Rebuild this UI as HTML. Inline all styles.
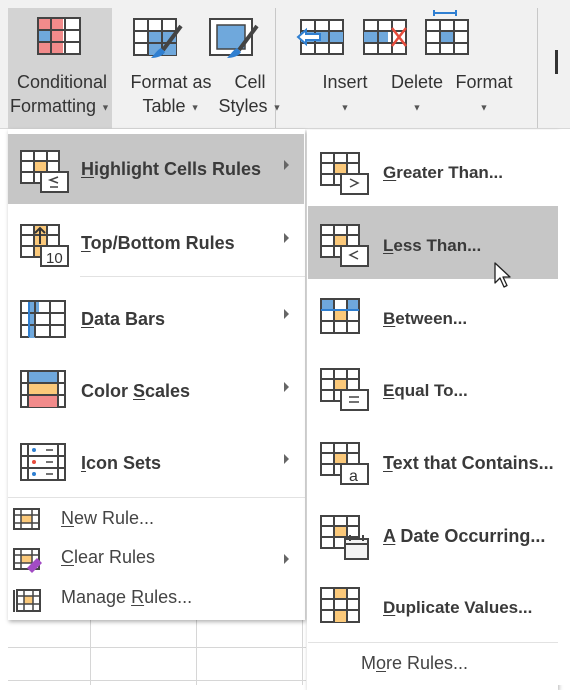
<!DOCTYPE html>
<html><head><meta charset="utf-8">
<style>
*{margin:0;padding:0;box-sizing:border-box}
body{width:570px;height:685px;overflow:hidden;background:#fff;font-family:"Liberation Sans",sans-serif;position:relative;color:#333}
.abs{position:absolute}
.rib{left:0;top:0;width:570px;height:129px;background:#f1f1f1;border-bottom:1px solid #d8d8d8}
.rl{position:absolute;font-size:18px;color:#333;text-align:center;line-height:24px;white-space:nowrap}
.car{font-size:9px;color:#555;vertical-align:middle}
.menu{background:#fff;box-shadow:1px 2px 4px rgba(0,0,0,.3)}
.it{position:absolute;font-size:17px;font-weight:bold;color:#3a3a3a;white-space:nowrap}
.l{font-size:18px}
.sm{position:absolute;font-size:18px;color:#444;white-space:nowrap}
.arr{position:absolute;width:0;height:0;border-left:5px solid #666;border-top:5px solid transparent;border-bottom:5px solid transparent}
u{text-decoration:underline;text-underline-offset:2px}
svg{position:absolute}
</style></head><body>
<div class="abs rib"></div>
<div class="abs" style="left:8px;top:8px;width:104px;height:121px;background:#d3d3d3"></div>
<div class="abs" style="left:275px;top:8px;width:1px;height:120px;background:#c8c8c8"></div>
<div class="abs" style="left:537px;top:8px;width:1px;height:120px;background:#c8c8c8"></div>
<div class="abs" style="left:555px;top:50px;width:3px;height:24px;background:#333"></div>

<svg style="left:37px;top:16px" width="44" height="40" viewBox="0 0 44 38">
<rect x="1" y="1" width="42" height="36" fill="#fff" stroke="#444" stroke-width="2"/>
<rect x="2" y="2" width="24" height="10" fill="#f28b8b"/><rect x="2" y="25" width="24" height="11" fill="#f28b8b"/><rect x="14" y="12" width="12" height="13" fill="#f28b8b"/><rect x="2" y="13" width="12" height="12" fill="#6fa8dc"/>
<path d="M14 1v36M28 1v36M1 13h42M1 25h42" stroke="#444" stroke-width="2" fill="none"/></svg>
<svg style="left:133px;top:18px" width="50" height="44" viewBox="0 0 50 44">
<rect x="1" y="1" width="42" height="36" fill="#fff" stroke="#444" stroke-width="2"/><rect x="15" y="13" width="28" height="24" fill="#6fa8dc"/>
<path d="M15 1v36M29 1v36M1 13h42M1 25h42" stroke="#444" stroke-width="2" fill="none"/>
<path d="M48 8L30 32" stroke="#444" stroke-width="4"/><path d="M28 30c-4 2-6 6-10 10 6 0 12-2 14-6z" fill="#2f7fd1"/></svg>
<svg style="left:209px;top:18px" width="50" height="44" viewBox="0 0 50 44">
<rect x="1" y="1" width="42" height="36" fill="#fff" stroke="#444" stroke-width="2"/><rect x="8" y="7" width="28" height="24" fill="#6fa8dc" stroke="#444" stroke-width="1.5"/>
<path d="M48 8L30 32" stroke="#444" stroke-width="4"/><path d="M28 30c-4 2-6 6-10 10 6 0 12-2 14-6z" fill="#2f7fd1"/></svg>
<svg style="left:296px;top:18px" width="50" height="38" viewBox="0 0 50 38">
<rect x="5" y="2" width="42" height="34" fill="#fff" stroke="#444" stroke-width="2"/><rect x="5" y="13" width="42" height="12" fill="#6fa8dc"/>
<path d="M19 2v34M33 2v34M5 13h42M5 25h42" stroke="#444" stroke-width="2" fill="none"/>
<path d="M2 19l8-7v4h14v6h-14v4z" fill="#fff" stroke="#2f7fd1" stroke-width="2"/></svg>
<svg style="left:362px;top:18px" width="48" height="38" viewBox="0 0 48 38">
<rect x="2" y="2" width="42" height="34" fill="#fff" stroke="#444" stroke-width="2"/><rect x="2" y="13" width="24" height="12" fill="#6fa8dc"/>
<path d="M16 2v34M30 2v34M2 13h42M2 25h42" stroke="#444" stroke-width="2" fill="none"/>
<path d="M30 10l14 18M44 10l-14 18" stroke="#e74c3c" stroke-width="2.5"/></svg>
<svg style="left:424px;top:10px" width="48" height="46" viewBox="0 0 48 46">
<path d="M10 3h22M10 0v6M32 0v6" stroke="#2f7fd1" stroke-width="2"/>
<rect x="2" y="10" width="42" height="34" fill="#fff" stroke="#444" stroke-width="2"/><rect x="16" y="21" width="14" height="12" fill="#6fa8dc"/>
<path d="M16 10v34M30 10v34M2 21h42M2 33h42" stroke="#444" stroke-width="2" fill="none"/></svg>

<div class="rl" style="left:8px;top:70px;width:108px">Conditional</div>
<div class="rl" style="left:2px;top:94px;width:116px">Formatting <span class="car">▼</span></div>
<div class="rl" style="left:116px;top:70px;width:110px">Format as</div>
<div class="rl" style="left:116px;top:94px;width:110px">Table <span class="car">▼</span></div>
<div class="rl" style="left:210px;top:70px;width:80px">Cell</div>
<div class="rl" style="left:208px;top:94px;width:84px">Styles <span class="car">▼</span></div>
<div class="rl" style="left:300px;top:70px;width:90px">Insert</div>
<div class="rl" style="left:300px;top:94px;width:90px"><span class="car">▼</span></div>
<div class="rl" style="left:382px;top:70px;width:70px">Delete</div>
<div class="rl" style="left:382px;top:94px;width:70px"><span class="car">▼</span></div>
<div class="rl" style="left:446px;top:70px;width:76px">Format</div>
<div class="rl" style="left:446px;top:94px;width:76px"><span class="car">▼</span></div>

<div class="abs" style="left:8px;top:647px;width:298px;height:1px;background:#d6d6d6"></div>
<div class="abs" style="left:8px;top:680px;width:298px;height:1px;background:#d6d6d6"></div>
<div class="abs" style="left:90px;top:620px;width:1px;height:65px;background:#d6d6d6"></div>
<div class="abs" style="left:196px;top:620px;width:1px;height:65px;background:#d6d6d6"></div>
<div class="abs" style="left:302px;top:620px;width:1px;height:65px;background:#d6d6d6"></div>

<div class="abs menu" style="left:8px;top:129px;width:297px;height:491px"></div>
<div class="abs" style="left:8px;top:134px;width:296px;height:70px;background:#c6c6c6"></div>
<div class="abs" style="left:80px;top:276px;width:225px;height:1px;background:#e2e2e2"></div>
<div class="abs" style="left:8px;top:497px;width:297px;height:1px;background:#e2e2e2"></div>

<svg style="left:20px;top:150px" width="50" height="44" viewBox="0 0 50 44">
<rect x="1" y="1" width="38" height="32" fill="#fff" stroke="#444" stroke-width="2"/><rect x="14" y="11" width="13" height="11" fill="#fbc97a"/>
<path d="M14 1v32M27 1v32M1 11h38M1 22h38" stroke="#444" stroke-width="2" fill="none"/>
<rect x="21" y="22" width="27" height="20" fill="#fff" stroke="#444" stroke-width="2"/><path d="M38 27l-8 3 8 3M30 37h8" stroke="#444" stroke-width="1.5" fill="none"/></svg>
<svg style="left:20px;top:224px" width="50" height="44" viewBox="0 0 50 44">
<rect x="1" y="1" width="38" height="32" fill="#fff" stroke="#444" stroke-width="2"/><rect x="14" y="2" width="13" height="30" fill="#fbc97a"/>
<path d="M14 1v32M27 1v32M1 11h38M1 22h38" stroke="#444" stroke-width="2" fill="none"/>
<path d="M20 20V4M15 9l5-5 5 5" stroke="#333" stroke-width="2" fill="none"/>
<rect x="21" y="22" width="27" height="20" fill="#fff" stroke="#444" stroke-width="2"/><text x="26" y="39" font-size="15" font-family="Liberation Sans" fill="#333">10</text></svg>
<svg style="left:20px;top:300px" width="48" height="40" viewBox="0 0 48 40">
<rect x="1" y="1" width="44" height="36" fill="#fff" stroke="#444" stroke-width="2"/><rect x="9" y="2" width="10" height="12" fill="#6fa8dc"/><rect x="9" y="14" width="6" height="24" fill="#6fa8dc"/>
<path d="M15 1v36M30 1v36M1 13h44M1 25h44" stroke="#444" stroke-width="2" fill="none"/><path d="M9 2v35" stroke="#2f7fd1" stroke-width="2"/></svg>
<svg style="left:20px;top:370px" width="48" height="40" viewBox="0 0 48 40">
<rect x="1" y="1" width="44" height="36" fill="#fff" stroke="#444" stroke-width="2"/><rect x="8" y="2" width="30" height="11" fill="#6fa8dc"/><rect x="8" y="13" width="30" height="12" fill="#fbc97a"/><rect x="8" y="25" width="30" height="12" fill="#f28b8b"/>
<path d="M8 1v36M38 1v36M1 13h44M1 25h44" stroke="#444" stroke-width="2" fill="none"/></svg>
<svg style="left:20px;top:443px" width="48" height="40" viewBox="0 0 48 40">
<rect x="1" y="1" width="44" height="36" fill="#fff" stroke="#444" stroke-width="2"/>
<path d="M8 1v36M38 1v36M1 13h44M1 25h44" stroke="#444" stroke-width="2" fill="none"/>
<circle cx="14" cy="7" r="2" fill="#2f7fd1"/><circle cx="14" cy="19" r="2" fill="#e74c3c"/><circle cx="14" cy="31" r="2" fill="#2f7fd1"/>
<path d="M26 7h7M26 19h7M26 31h7" stroke="#444" stroke-width="1.5"/></svg>

<div class="it l" style="left:81px;top:159px"><u>H</u>ighlight Cells Rules</div>
<div class="it l" style="left:81px;top:233px"><u>T</u>op/Bottom Rules</div>
<div class="it l" style="left:81px;top:309px"><u>D</u>ata Bars</div>
<div class="it l" style="left:81px;top:381px">Color <u>S</u>cales</div>
<div class="it l" style="left:81px;top:453px"><u>I</u>con Sets</div>
<div class="arr" style="left:284px;top:160px"></div>
<div class="arr" style="left:284px;top:233px"></div>
<div class="arr" style="left:284px;top:309px"></div>
<div class="arr" style="left:284px;top:382px"></div>
<div class="arr" style="left:284px;top:454px"></div>
<div class="arr" style="left:284px;top:554px"></div>

<svg style="left:13px;top:508px" width="28" height="24" viewBox="0 0 28 24">
<rect x="1" y="1" width="25" height="20" fill="#fff" stroke="#444" stroke-width="2"/><rect x="8" y="7" width="11" height="8" fill="#fbc97a"/><path d="M8 1v20M19 1v20M1 7h25M1 15h25" stroke="#444" stroke-width="1.5" fill="none"/></svg>
<svg style="left:13px;top:548px" width="30" height="26" viewBox="0 0 30 26">
<rect x="1" y="1" width="25" height="20" fill="#fff" stroke="#444" stroke-width="2"/><rect x="8" y="7" width="11" height="8" fill="#fbc97a"/><path d="M8 1v20M19 1v20M1 7h25M1 15h25" stroke="#444" stroke-width="1.5" fill="none"/>
<path d="M14 20l10-10 5 5-10 10z" fill="#a24bc4"/></svg>
<svg style="left:13px;top:587px" width="28" height="26" viewBox="0 0 28 26">
<path d="M1 25V3" stroke="#444" stroke-width="2"/><rect x="4" y="3" width="23" height="21" fill="#fff" stroke="#444" stroke-width="2"/><rect x="11" y="9" width="9" height="8" fill="#fbc97a"/><path d="M11 3v21M20 3v21M4 9h23M4 17h23" stroke="#444" stroke-width="1.5" fill="none"/></svg>
<div class="sm" style="left:61px;top:508px"><u>N</u>ew Rule...</div>
<div class="sm" style="left:61px;top:547px"><u>C</u>lear Rules</div>
<div class="sm" style="left:61px;top:587px">Manage <u>R</u>ules...</div>

<div class="abs menu" style="left:307px;top:130px;width:251px;height:560px;overflow:hidden"></div>
<div class="abs" style="left:308px;top:206px;width:250px;height:73px;background:#c6c6c6"></div>
<div class="abs" style="left:308px;top:642px;width:250px;height:1px;background:#e2e2e2"></div>

<svg style="left:320px;top:152px" width="50" height="44" viewBox="0 0 50 44">
<rect x="1" y="1" width="38" height="32" fill="#fff" stroke="#444" stroke-width="2"/><rect x="14" y="11" width="13" height="11" fill="#fbc97a"/><path d="M14 1v32M27 1v32M1 11h38M1 22h38" stroke="#444" stroke-width="2" fill="none"/>
<rect x="21" y="22" width="27" height="20" fill="#fff" stroke="#444" stroke-width="2"/><path d="M30 27l8 4-8 4" stroke="#444" stroke-width="1.5" fill="none"/></svg>
<svg style="left:320px;top:224px" width="50" height="44" viewBox="0 0 50 44">
<rect x="1" y="1" width="38" height="32" fill="#fff" stroke="#444" stroke-width="2"/><rect x="14" y="11" width="13" height="11" fill="#fbc97a"/><path d="M14 1v32M27 1v32M1 11h38M1 22h38" stroke="#444" stroke-width="2" fill="none"/>
<rect x="21" y="22" width="27" height="20" fill="#fff" stroke="#444" stroke-width="2"/><path d="M38 27l-8 4 8 4" stroke="#444" stroke-width="1.5" fill="none"/></svg>
<svg style="left:320px;top:298px" width="42" height="38" viewBox="0 0 42 38">
<rect x="1" y="1" width="38" height="34" fill="#fff" stroke="#444" stroke-width="2"/><rect x="2" y="2" width="12" height="10" fill="#6fa8dc"/><rect x="27" y="2" width="11" height="10" fill="#6fa8dc"/><rect x="14" y="12" width="13" height="11" fill="#fbc97a"/>
<path d="M14 1v34M27 1v34M1 12h38M1 23h38" stroke="#444" stroke-width="2" fill="none"/><path d="M1 12h38" stroke="#2f7fd1" stroke-width="2"/></svg>
<svg style="left:320px;top:368px" width="50" height="44" viewBox="0 0 50 44">
<rect x="1" y="1" width="38" height="32" fill="#fff" stroke="#444" stroke-width="2"/><rect x="14" y="11" width="13" height="11" fill="#fbc97a"/><path d="M14 1v32M27 1v32M1 11h38M1 22h38" stroke="#444" stroke-width="2" fill="none"/>
<rect x="21" y="22" width="27" height="20" fill="#fff" stroke="#444" stroke-width="2"/><path d="M29 29h10M29 34h10" stroke="#444" stroke-width="1.5"/></svg>
<svg style="left:320px;top:442px" width="50" height="44" viewBox="0 0 50 44">
<rect x="1" y="1" width="38" height="32" fill="#fff" stroke="#444" stroke-width="2"/><rect x="14" y="11" width="13" height="11" fill="#fbc97a"/><path d="M14 1v32M27 1v32M1 11h38M1 22h38" stroke="#444" stroke-width="2" fill="none"/>
<rect x="21" y="22" width="27" height="20" fill="#fff" stroke="#444" stroke-width="2"/><text x="29" y="39" font-size="16" font-family="Liberation Sans" fill="#333">a</text></svg>
<svg style="left:320px;top:515px" width="50" height="46" viewBox="0 0 50 46">
<rect x="1" y="1" width="38" height="32" fill="#fff" stroke="#444" stroke-width="2"/><rect x="14" y="11" width="13" height="11" fill="#fbc97a"/><path d="M14 1v32M27 1v32M1 11h38M1 22h38" stroke="#444" stroke-width="2" fill="none"/>
<rect x="25" y="24" width="23" height="20" fill="#f4f4f4" stroke="#444" stroke-width="2"/><path d="M25 29h23M30 20v6M43 20v6" stroke="#444" stroke-width="2"/></svg>
<svg style="left:320px;top:587px" width="42" height="38" viewBox="0 0 42 38">
<rect x="1" y="1" width="38" height="34" fill="#fff" stroke="#444" stroke-width="2"/><rect x="14" y="2" width="13" height="10" fill="#fbc97a"/><rect x="14" y="23" width="13" height="12" fill="#fbc97a"/>
<path d="M14 1v34M27 1v34M1 12h38M1 23h38" stroke="#444" stroke-width="2" fill="none"/></svg>

<div class="it" style="left:383px;top:163px"><u>G</u>reater Than...</div>
<div class="it" style="left:383px;top:236px"><u>L</u>ess Than...</div>
<div class="it" style="left:383px;top:309px"><u>B</u>etween...</div>
<div class="it" style="left:383px;top:381px"><u>E</u>qual To...</div>
<div class="it" style="left:383px;top:453px;font-size:18px"><u>T</u>ext that Contains...</div>
<div class="it" style="left:383px;top:526px;font-size:18px"><u>A</u> Date Occurring...</div>
<div class="it" style="left:383px;top:598px"><u>D</u>uplicate Values...</div>
<div class="sm" style="left:361px;top:653px">M<u>o</u>re Rules...</div>
<div class="abs" style="left:558px;top:130px;width:12px;height:555px;background:#fff"></div>

<svg style="left:494px;top:262px" width="20" height="28" viewBox="0 0 20 28">
<path d="M1 1v20l5-5 4 9 3-1.5-4-8.5h7z" fill="#fff" stroke="#222" stroke-width="1.3" stroke-linejoin="round"/></svg>
</body></html>
